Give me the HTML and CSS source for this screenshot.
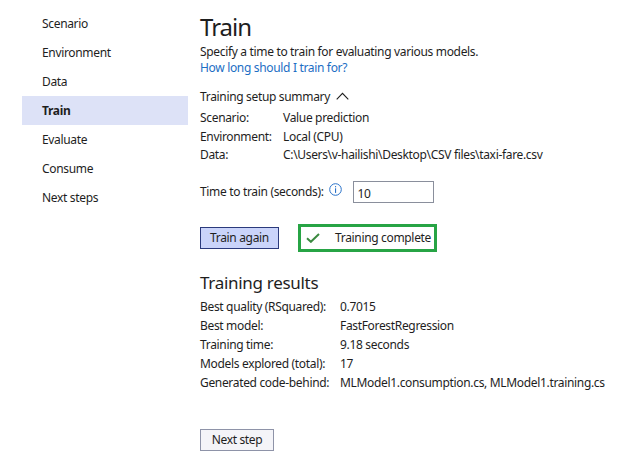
FILE: index.html
```html
<!DOCTYPE html>
<html>
<head>
<meta charset="utf-8">
<link rel="stylesheet" href="styles.css">
</head>
<body>
<div class="page">
  <nav class="sidebar">
    <div class="nav-item">Scenario</div>
    <div class="nav-item">Environment</div>
    <div class="nav-item">Data</div>
    <div class="nav-item active">Train</div>
    <div class="nav-item">Evaluate</div>
    <div class="nav-item">Consume</div>
    <div class="nav-item">Next steps</div>
  </nav>
  <main class="main">
    <h1 class="title">Train</h1>
    <p class="desc">Specify a time to train for evaluating various models.</p>
    <a class="link" href="#">How long should I train for?</a>
    <div class="summary-toggle">
      <span>Training setup summary</span>
      <svg class="chevron" width="13" height="8" viewBox="0 0 13 8"><path d="M0.7 7.3 L6.5 1.3 L12.3 7.3" fill="none" stroke="#1e1e1e" stroke-width="1.1"/></svg>
    </div>
    <div class="kv setup">
      <div class="k">Scenario:</div><div class="v">Value prediction</div>
      <div class="k">Environment:</div><div class="v">Local (CPU)</div>
      <div class="k">Data:</div><div class="v">C:\Users\v-hailishi\Desktop\CSV files\taxi-fare.csv</div>
    </div>
    <div class="time-row">
      <span class="time-label">Time to train (seconds):</span>
      <svg class="info" width="13" height="13" viewBox="0 0 13 13"><circle cx="6.5" cy="6.5" r="5.8" fill="none" stroke="#2a72c9" stroke-width="1"/><rect x="6" y="5.3" width="1.1" height="4.6" fill="#2a72c9"/><rect x="6" y="3.1" width="1.1" height="1.2" fill="#2a72c9"/></svg>
      <div class="input">10</div>
    </div>
    <div class="actions">
      <button class="btn primary">Train again</button>
      <div class="status">
        <svg class="check" width="14" height="10" viewBox="0 0 14 10"><path d="M1 5.2 L4.9 8.8 L13 1" fill="none" stroke="#3b8a40" stroke-width="2"/></svg>
        <span class="status-text">Training complete</span>
      </div>
    </div>
    <h2 class="subtitle">Training results</h2>
    <div class="kv results">
      <div class="k">Best quality (RSquared):</div><div class="v">0.7015</div>
      <div class="k">Best model:</div><div class="v">FastForestRegression</div>
      <div class="k">Training time:</div><div class="v">9.18 seconds</div>
      <div class="k">Models explored (total):</div><div class="v">17</div>
      <div class="k">Generated code-behind:</div><div class="v">MLModel1.consumption.cs, MLModel1.training.cs</div>
    </div>
    <button class="btn secondary">Next step</button>
  </main>
</div>
</body>
</html>
```
FILE: styles.css
```css
* { box-sizing: border-box; }
html, body { margin: 0; padding: 0; background: #ffffff; }
body {
  font-family: "Segoe UI", "Noto Sans", "Open Sans", sans-serif;
  font-size: 12px;
  letter-spacing: -0.33px;
  color: #1e1e1e;
}
.page {
  display: flex;
  align-items: flex-start;
  width: 627px;
  height: 466px;
}
.sidebar {
  width: 166px;
  margin-left: 22px;
  padding-top: 9px;
  display: flex;
  flex-direction: column;
}
.nav-item {
  height: 29px;
  line-height: 29px;
  padding-left: 20px;
}
.nav-item.active {
  background: #dde2f7;
  font-weight: 700;
}
.main {
  margin-left: 12px;
  display: flex;
  flex-direction: column;
  align-items: flex-start;
}
.title {
  margin: 11px 0 1px;
  font-size: 24px;
  line-height: 32px;
  font-weight: 400;
  letter-spacing: -1px;
}
.desc {
  margin: 0;
  line-height: 16px;
}
.link {
  color: #1c6ec4;
  text-decoration: none;
  line-height: 16px;
}
.summary-toggle {
  margin-top: 12px;
  line-height: 18px;
  display: flex;
  align-items: center;
  gap: 6px;
}
.chevron { margin-top: -2px; }
.kv {
  display: grid;
  margin-top: 3px;
}
.kv.setup {
  grid-template-columns: 83px auto;
  grid-auto-rows: 18.5px;
  line-height: 18.5px;
}
.kv.results {
  grid-template-columns: 140px auto;
  grid-auto-rows: 19px;
  line-height: 19px;
  margin-top: 2px;
}
.k, .v { white-space: nowrap; }
.time-row {
  margin-top: 16px;
  display: flex;
  align-items: center;
  height: 22px;
}
.info { margin-left: 5px; margin-top: -4px; }
.input {
  margin-left: 11px;
  width: 81px;
  height: 22px;
  border: 1px solid #8a8f9c;
  padding: 0 0 0 4px;
  line-height: 21px;
  padding-top: 1px;
}
.actions {
  margin-top: 21px;
  display: flex;
  align-items: center;
  gap: 19px;
}
.btn {
  font-family: inherit;
  font-size: 12px;
  letter-spacing: -0.33px;
  color: #1e1e1e;
  height: 22px;
  padding: 0;
  margin: 0;
  line-height: 20px;
}
.btn.primary {
  width: 79px;
  background: #cad4fa;
  border: 1px solid #2b3a7c;
}
.btn.secondary {
  margin-top: 37px;
  width: 74px;
  background: #f4f4f8;
  border: 1px solid #8e93a8;
}
.status {
  width: 139px;
  height: 28px;
  border: 3px solid #27a445;
  display: flex;
  align-items: center;
  padding-left: 5px;
}
.status-text { white-space: nowrap; }
.check { margin-right: 15px; flex: none; }
.subtitle {
  margin: 19px 0 0;
  font-size: 17px;
  line-height: 24px;
  font-weight: 400;
  letter-spacing: -0.3px;
}
```
